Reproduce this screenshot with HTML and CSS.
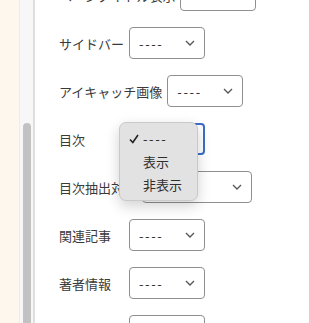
FILE: index.html
```html
<!DOCTYPE html>
<html lang="ja">
<head>
  <meta charset="UTF-8">
  <title>記事設定</title>
  <link rel="stylesheet" href="styles.css">
</head>
<body>
  <div class="page">
    <div class="side-bg"></div>
    <div class="scroll-track">
      <div class="scroll-thumb"></div>
    </div>
    <div class="settings">
      <div class="setting-row">
        <span class="setting-label">ページタイトル表示</span>
        <div class="select-box"><span class="select-value">----</span>
          <svg class="chevron" width="10" height="6" viewBox="0 0 10 6"><path d="M1 1 L5 5 L9 1" fill="none" stroke="#555" stroke-width="1.3"/></svg>
        </div>
      </div>
      <div class="setting-row">
        <span class="setting-label">サイドバー</span>
        <div class="select-box"><span class="select-value">----</span>
          <svg class="chevron" width="10" height="6" viewBox="0 0 10 6"><path d="M1 1 L5 5 L9 1" fill="none" stroke="#555" stroke-width="1.3"/></svg>
        </div>
      </div>
      <div class="setting-row">
        <span class="setting-label">アイキャッチ画像</span>
        <div class="select-box"><span class="select-value">----</span>
          <svg class="chevron" width="10" height="6" viewBox="0 0 10 6"><path d="M1 1 L5 5 L9 1" fill="none" stroke="#555" stroke-width="1.3"/></svg>
        </div>
      </div>
      <div class="setting-row">
        <span class="setting-label">目次</span>
        <div class="select-box focused"><span class="select-value">----</span>
          <svg class="chevron" width="10" height="6" viewBox="0 0 10 6"><path d="M1 1 L5 5 L9 1" fill="none" stroke="#555" stroke-width="1.3"/></svg>
          <ul class="option-menu">
            <li class="option checked">
              <svg class="check" width="10" height="10" viewBox="0 0 10 10"><path d="M1 5.5 L3.8 8.5 L9 1" fill="none" stroke="#222" stroke-width="1.6"/></svg>
              <span class="dashes">----</span>
            </li>
            <li class="option">表示</li>
            <li class="option">非表示</li>
          </ul>
        </div>
      </div>
      <div class="setting-row">
        <span class="setting-label">目次抽出対象</span>
        <div class="select-box wide"><span class="select-value">----</span>
          <svg class="chevron" width="10" height="6" viewBox="0 0 10 6"><path d="M1 1 L5 5 L9 1" fill="none" stroke="#555" stroke-width="1.3"/></svg>
        </div>
      </div>
      <div class="setting-row">
        <span class="setting-label">関連記事</span>
        <div class="select-box"><span class="select-value">----</span>
          <svg class="chevron" width="10" height="6" viewBox="0 0 10 6"><path d="M1 1 L5 5 L9 1" fill="none" stroke="#555" stroke-width="1.3"/></svg>
        </div>
      </div>
      <div class="setting-row">
        <span class="setting-label">著者情報</span>
        <div class="select-box"><span class="select-value">----</span>
          <svg class="chevron" width="10" height="6" viewBox="0 0 10 6"><path d="M1 1 L5 5 L9 1" fill="none" stroke="#555" stroke-width="1.3"/></svg>
        </div>
      </div>
      <div class="setting-row">
        <span class="setting-label">コメント</span>
        <div class="select-box"><span class="select-value">----</span>
          <svg class="chevron" width="10" height="6" viewBox="0 0 10 6"><path d="M1 1 L5 5 L9 1" fill="none" stroke="#555" stroke-width="1.3"/></svg>
        </div>
      </div>
    </div>
  </div>
</body>
</html>
```

FILE: styles.css
```css
html, body {
  margin: 0;
  height: 100%;
  overflow: hidden;
  background: #ffffff;
}
body {
  font-family: "Noto Sans CJK JP", "Noto Sans", sans-serif;
  font-size: 13px;
  color: #3a3a3a;
}
.page {
  display: flex;
  height: 323px;
}
.side-bg {
  width: 19px;
  background: #fdf7ee;
  border-right: 1px solid #ececec;
}
.scroll-track {
  width: 13px;
  background: #f7f7f7;
  border-right: 2px solid #dedede;
  display: flex;
  flex-direction: column;
  align-items: center;
  padding-top: 123px;
}
.scroll-thumb {
  width: 8px;
  flex: 1;
  background: #c2c2c2;
  border-radius: 4px 4px 0 0;
}
.settings {
  padding-left: 24px;
  margin-top: -21px;
  display: flex;
  flex-direction: column;
  gap: 16px;
}
.setting-row {
  display: flex;
  align-items: center;
  gap: 5px;
  height: 32px;
}
.setting-label {
  min-width: 65px;
  white-space: nowrap;
}
.select-box {
  position: relative;
  box-sizing: border-box;
  width: 76px;
  height: 32px;
  border: 1px solid #8f8f8f;
  border-radius: 4px;
  display: flex;
  align-items: center;
  justify-content: space-between;
  padding: 0 9px 0 9px;
  background: #fff;
}
.select-box.wide {
  width: 110px;
}
.select-box.focused {
  border: 2px solid #3b6ec8;
  padding: 0 8px;
}
.select-value {
  letter-spacing: 1.6px;
  color: #333;
}
.option-menu {
  position: absolute;
  left: -12px;
  top: -3px;
  width: 79px;
  height: 79px;
  box-sizing: border-box;
  margin: 0;
  padding: 4px 0 0;
  list-style: none;
  background: #e2e2e2;
  border: 1px solid #c9c9c9;
  border-radius: 7px;
  box-shadow: 0 5px 14px rgba(0, 0, 0, 0.18);
  z-index: 2;
}
.option {
  height: 23px;
  line-height: 23px;
  padding-left: 23px;
  position: relative;
  color: #2e2e2e;
}
.option .check {
  position: absolute;
  left: 9px;
  top: 7px;
}
.dashes {
  letter-spacing: 1.6px;
}
```
